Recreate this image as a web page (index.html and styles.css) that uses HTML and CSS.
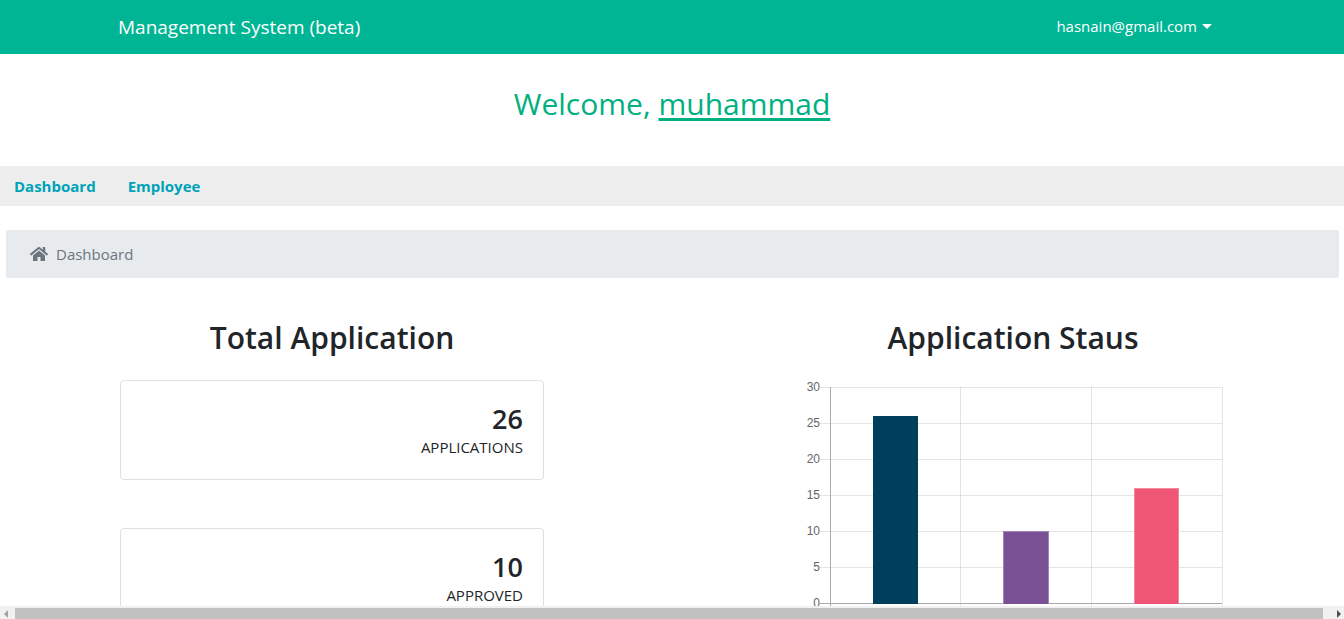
FILE: index.html
```html
<!DOCTYPE html>
<html lang="en">
<head>
<meta charset="utf-8">
<title>Management System</title>
<link rel="stylesheet" href="styles.css">
</head>
<body>
<div class="page">
  <header class="navbar">
    <div class="container">
      <a class="brand" href="#">Management System (beta)</a>
      <button class="account" type="button">hasnain@gmail.com<span class="caret"></span></button>
    </div>
  </header>
  <h2 class="welcome">Welcome, <u>muhammad</u></h2>
  <nav class="tabs">
    <a href="#">Dashboard</a>
    <a href="#">Employee</a>
  </nav>
  <div class="breadcrumb">
    <svg class="home" viewBox="0 0 576 512" aria-hidden="true"><path d="M280.37 148.26L96 300.11V464a16 16 0 0 0 16 16l112.06-.29a16 16 0 0 0 15.92-16V368a16 16 0 0 1 16-16h64a16 16 0 0 1 16 16v95.64a16 16 0 0 0 16 16.05L464 480a16 16 0 0 0 16-16V300L295.67 148.26a12.19 12.19 0 0 0-15.3 0zM571.6 251.47L488 182.56V44.05a12 12 0 0 0-12-12h-56a12 12 0 0 0-12 12v72.61L318.47 43a48 48 0 0 0-61 0L4.34 251.47a12 12 0 0 0-1.6 16.9l25.5 31A12 12 0 0 0 45.15 301l235.22-193.74a12.19 12.19 0 0 1 15.3 0L530.9 301a12 12 0 0 0 16.9-1.6l25.5-31a12 12 0 0 0-1.7-16.93z"/></svg>
    <span>Dashboard</span>
  </div>
  <main class="row">
    <section class="col">
      <h2 class="title">Total Application</h2>
      <div class="card">
        <h3>26</h3>
        <p>APPLICATIONS</p>
      </div>
      <div class="card">
        <h3>10</h3>
        <p>APPROVED</p>
      </div>
    </section>
    <section class="col">
      <h2 class="title">Application Staus</h2>
      <svg class="chart" viewBox="0 0 424 240" role="img" aria-label="Application status bar chart">
        <path class="grid" d="M19 7.5H421M19 43.5H421M19 79.5H421M19 115.5H421M19 151.5H421M19 187.5H421M159.5 7V234M290.5 7V234M421.5 7V234"/>
        <path class="axis" d="M29.5 7V234M19 223.5H421"/>
        <g class="ticks">
          <text x="19" y="11">30</text>
          <text x="19" y="47">25</text>
          <text x="19" y="83">20</text>
          <text x="19" y="119">15</text>
          <text x="19" y="155">10</text>
          <text x="19" y="191">5</text>
          <text x="19" y="227">0</text>
        </g>
        <rect class="navy" x="72" y="36" width="45" height="188"/>
        <rect class="purple" x="202" y="151" width="46" height="73"/>
        <path class="edge" d="M202.5 224V151.5H247.5V224"/>
        <rect class="pink" x="333" y="108" width="45" height="116"/>
        <path class="edge" d="M333.5 224V108.5H377.5V224"/>
      </svg>
    </section>
  </main>
</div>
<div class="scrollbar" aria-hidden="true">
  <span class="arrow arrow-left"></span>
  <span class="thumb"></span>
  <span class="arrow arrow-right"></span>
</div>
</body>
</html>
```
FILE: styles.css
```css
* { box-sizing: border-box; }

body {
  margin: 0;
  height: 100vh;
  display: flex;
  flex-direction: column;
  overflow: hidden;
  background: #fff;
  color: #212529;
  font: 15px/24px "Open Sans", sans-serif;
}

h2, h3, p { margin: 0; }

.page { flex: 1; min-height: 0; overflow: hidden; }

.navbar { background: #00b594; }

.container {
  max-width: 1140px;
  height: 54px;
  margin: 0 auto;
  padding: 0 16px;
  display: flex;
  align-items: center;
  justify-content: space-between;
}

.brand { color: #fff; font-size: 19px; text-decoration: none; }

.account {
  display: flex;
  align-items: center;
  gap: 5px;
  padding: 0 14px 2px;
  border: 0;
  background: none;
  color: #fff;
  font: inherit;
}

.caret { border: 5px solid transparent; border-top-color: #fff; border-bottom: 0; }

.welcome {
  padding: 30px 0 42px;
  color: #00b080;
  font-size: 30px;
  font-weight: 400;
  line-height: 40px;
  text-align: center;
}

.welcome u { text-decoration-thickness: 3px; text-underline-offset: 3px; text-decoration-skip-ink: none; }

.tabs {
  display: flex;
  gap: 32px;
  padding: 8px 14px;
  background: #eee;
}

.tabs a { color: #00a2b8; font-weight: 700; text-decoration: none; }

.breadcrumb {
  display: flex;
  align-items: center;
  gap: 8px;
  margin: 24px 5px 0 6px;
  padding: 12px 24px;
  border-radius: 2px;
  background: #e7ebee;
  color: #6c757d;
}

.home { width: 18px; height: 16px; fill: currentColor; }

.row {
  display: grid;
  grid-template-columns: 1fr 1fr;
  margin: 40px -10px 0 -8px;
}

.col { padding: 0 129px 0 128px; }

.title {
  margin-bottom: 22px;
  font-size: 30px;
  font-weight: 600;
  line-height: 40px;
  text-align: center;
}

.card {
  height: 100px;
  margin-bottom: 48px;
  padding: 20px;
  border: 1px solid #dfdfdf;
  border-radius: 4px;
  text-align: right;
}

.card h3 { font-size: 27px; font-weight: 600; line-height: 36px; }
.card p { line-height: 20px; }

.chart { display: block; width: 100%; }
.grid { stroke: rgba(0, 0, 0, 0.1); }
.axis { stroke: #aaa; }
.ticks { fill: #666; font: 12px "Liberation Sans", Arial, sans-serif; text-anchor: end; }
.navy { fill: #003f5c; }
.purple { fill: #7a5195; }
.pink { fill: #ef5675; }
.edge { fill: none; stroke: rgba(255, 255, 255, 0.3); }

.scrollbar {
  display: flex;
  align-items: center;
  gap: 7px;
  height: 13px;
  padding: 2px 3px 0 4px;
  background: #f1f1f1;
}

.thumb { flex: 1; height: 11px; margin-right: 7px; background: #c1c1c1; }
.arrow { border: 4px solid transparent; }
.arrow-left { border-right-color: #a3a3a3; border-left: 0; }
.arrow-right { border-left-color: #505050; border-right: 0; }
```
